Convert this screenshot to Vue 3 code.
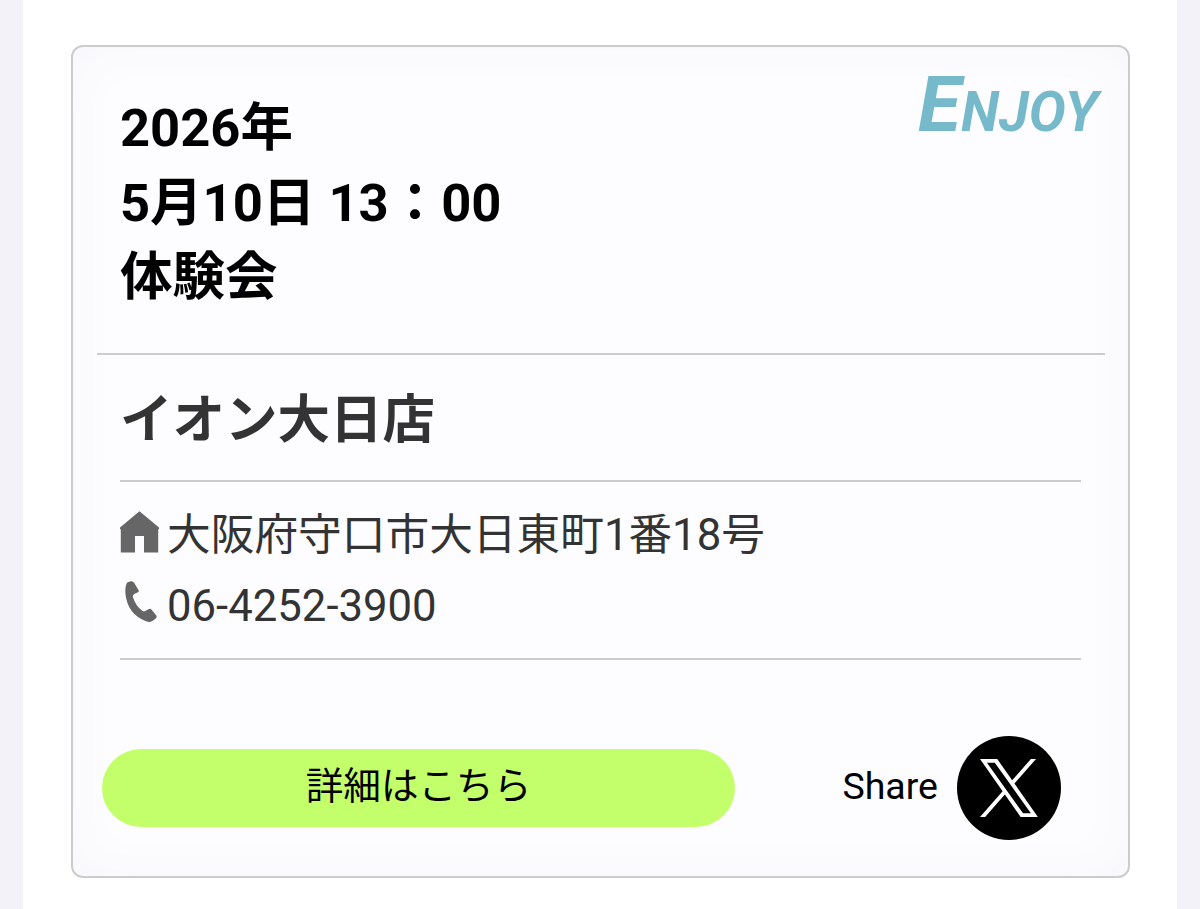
<script setup>
const event = {
  label: 'Enjoy',
  title: ['2026年', '5月10日 13：00', '体験会'],
  shop: 'イオン大日店',
  address: '大阪府守口市大日東町1番18号',
  tel: '06-4252-3900'
};
</script>

<template>
  <main class="page">
    <article class="card">
      <span class="label">{{ event.label }}</span>
      <h2 class="title">
        <span v-for="line in event.title" :key="line">{{ line }}</span>
      </h2>

      <section class="shop">
        <h3 class="shop-name">{{ event.shop }}</h3>
        <div class="contact">
          <p class="contact-row">
            <svg class="icon" viewBox="0 0 40 44">
              <path d="M19.5 1.2 39 17.6V19.2H38.2V42.5H24V26h-9v16.5H.8V19.2H0V17.6z" />
            </svg>
            <span>{{ event.address }}</span>
          </p>
          <p class="contact-row">
            <svg class="icon" viewBox="0 0 40 44">
              <path d="M7.5 1.2 10.8.3Q12.9-.2 14.1 1.8L18.6 9.2Q19.3 10.4 18 11.3L14.2 13.1Q12.3 14.1 13.1 16.6Q15.5 24.8 22.2 29.8Q23.9 31 25.2 30L29 28Q30.6 27.2 31.6 28.7L36.3 34.6Q37.3 36 35.7 37.4L32.9 39.8Q30.3 41.8 26 40.2Q7.5 33.3 5.4 12.5Q4.9 4.4 7.5 1.2z" />
            </svg>
            <span>{{ event.tel }}</span>
          </p>
        </div>
      </section>

      <footer class="actions">
        <a class="detail">詳細はこちら</a>
        <div class="share">
          <span class="share-text">Share</span>
          <a class="share-x">
            <svg viewBox="0 0 24 24">
              <path d="M14.258 10.152 23.176 0h-2.113l-7.747 8.813L7.133 0H0l9.352 13.328L0 23.973h2.113l8.176-9.309 6.531 9.309h7.133zm-2.895 3.293-.949-1.328L2.875 1.56h3.246l6.086 8.523.945 1.328 7.91 11.078h-3.246z" />
            </svg>
          </a>
        </div>
      </footer>
    </article>
  </main>
</template>

<style>
body {
  margin: 0;
  background: #f3f2f8;
}
</style>

<style scoped>
.page {
  box-sizing: border-box;
  height: 909px;
  margin: 0 23px;
  padding: 45px 47px 0 48px;
  overflow: hidden;
  background: #fff;
  font-family: Roboto, "Noto Sans CJK JP", sans-serif;
}

.card {
  position: relative;
  box-sizing: border-box;
  height: 833px;
  padding: 0 23px 0 24px;
  border: 2px solid #ccc;
  border-radius: 12px;
  background: #fdfdff;
  box-shadow: inset 0 0 52px #f7f7fb;
}

.label {
  position: absolute;
  top: 11px;
  right: 30px;
  color: #76b9cb;
  font-size: 55.4px;
  font-style: italic;
  font-weight: 700;
  line-height: 92px;
  text-transform: uppercase;
}

.label::first-letter {
  font-size: 78.5px;
}

.title {
  box-sizing: border-box;
  height: 308px;
  margin: 0;
  padding: 44px 23px 0;
  border-bottom: 2px solid #ccc;
  color: #000;
  font-size: 52.5px;
  font-weight: 700;
  line-height: 74.6px;
}

.title span {
  display: block;
}

.shop {
  padding: 0 24px 0 23px;
  color: #333;
}

.shop-name {
  box-sizing: border-box;
  height: 127px;
  margin: 0;
  padding-top: 3px;
  border-bottom: 2px solid #ccc;
  font-size: 52.5px;
  font-weight: 700;
  line-height: 125px;
}

.contact {
  box-sizing: border-box;
  height: 178px;
  padding-top: 17px;
  border-bottom: 2px solid #ccc;
  font-size: 43.7px;
  line-height: 71px;
}

.contact-row {
  display: flex;
  align-items: center;
  gap: 7px;
  height: 71px;
  margin: 0;
}

.contact-row span {
  padding-top: 1px;
}

.icon {
  width: 40px;
  height: 44px;
  margin-top: -6px;
  fill: #666;
}

.actions {
  display: flex;
  align-items: center;
  justify-content: space-between;
  margin-top: 76px;
  padding: 0 44px 0 5px;
  color: #000;
}

.detail {
  width: 633px;
  height: 78px;
  border-radius: 39px;
  background: #c3ff6b;
  font-size: 37.6px;
  line-height: 74px;
  text-align: center;
}

.share {
  display: flex;
  align-items: center;
  gap: 19px;
  font-size: 37.5px;
}

.share-text {
  padding-bottom: 5px;
}

.share-x {
  display: flex;
  align-items: center;
  justify-content: center;
  width: 104px;
  height: 104px;
  border-radius: 50%;
  background: #000;
}

.share-x svg {
  width: 58px;
  height: 60px;
  fill: #fff;
}
</style>
